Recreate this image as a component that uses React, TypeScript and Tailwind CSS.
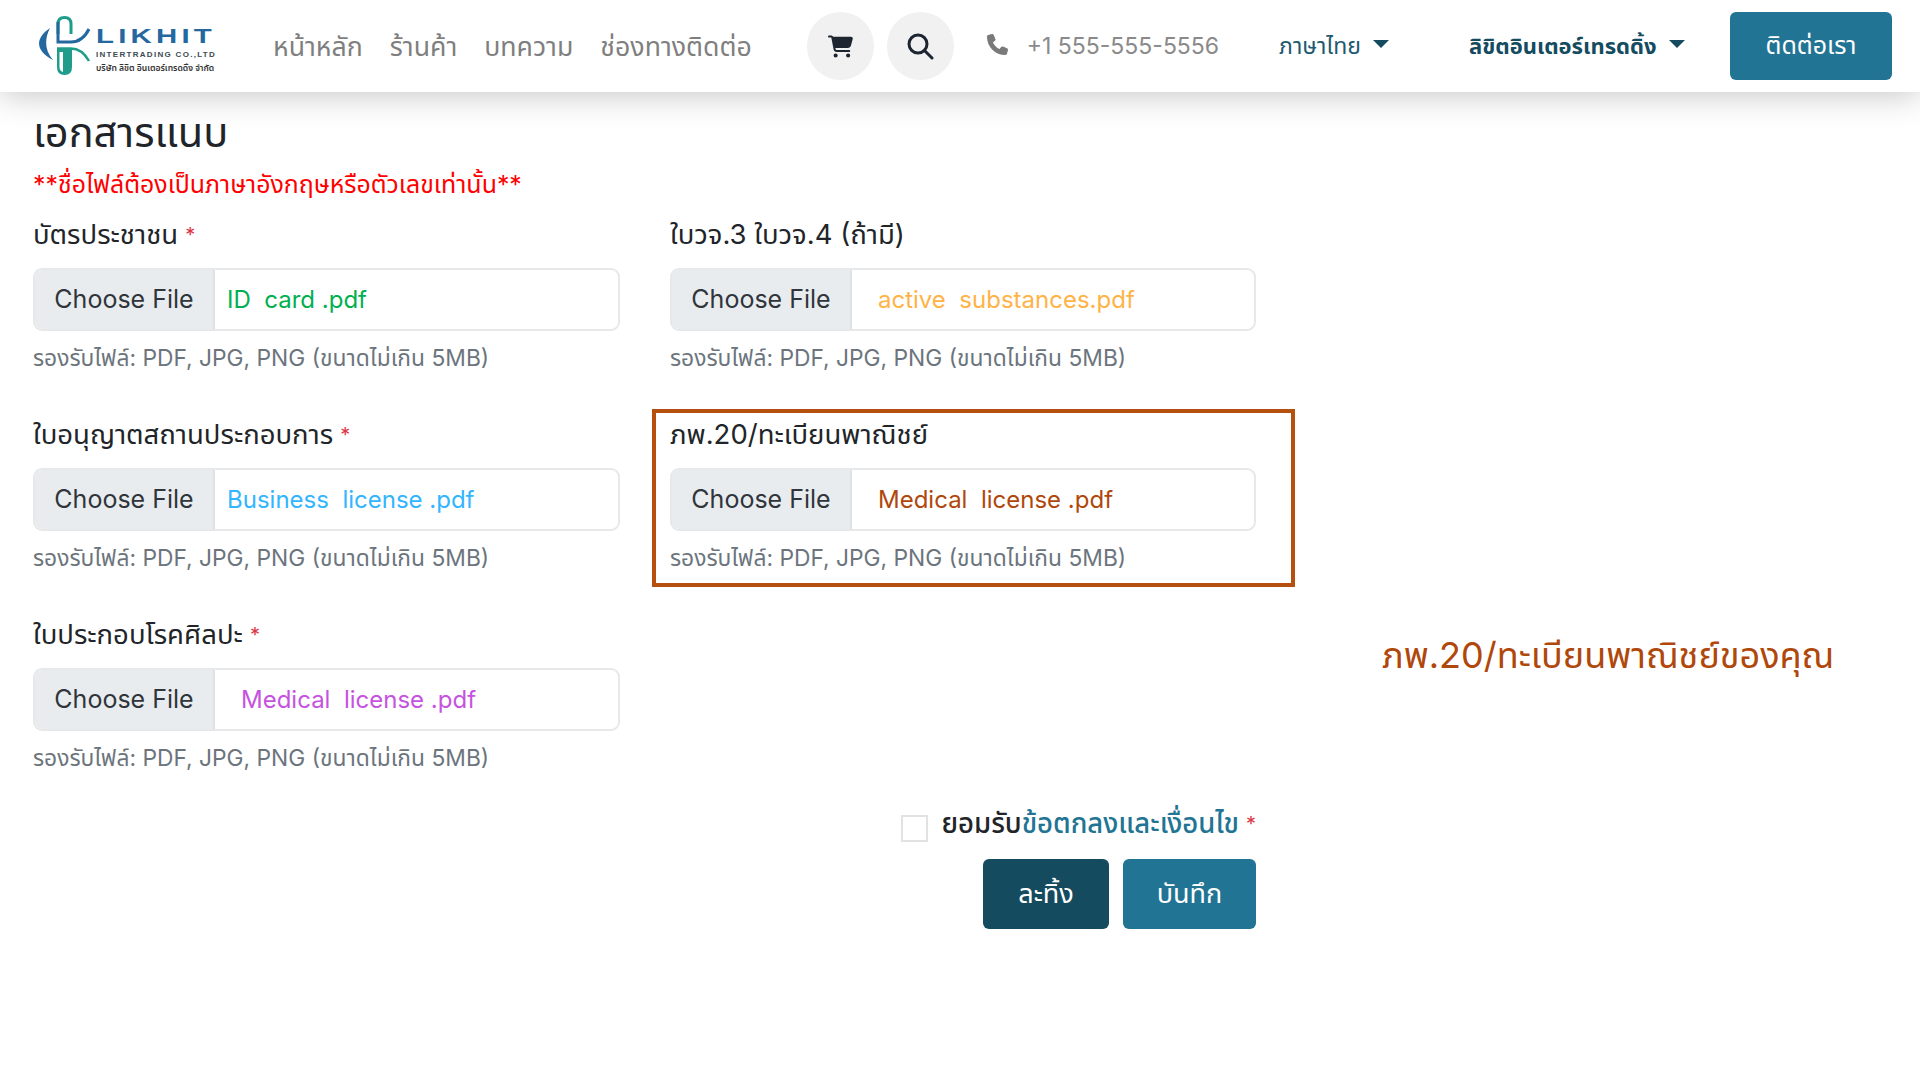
const font = '"Inter", "Noto Sans", "Noto Sans Thai", "Noto Sans CJK SC", sans-serif';

function Logo() {
  return (
    <div className="relative h-[68px] w-[190px] shrink-0">
      <svg viewBox="0 0 60 62" className="absolute left-[4px] top-[3px] h-[62px] w-[60px]" fill="none">
        <path d="M13 13 C-3 24 -1 36 16 45 C8 36 7 25 13 13Z" fill="#24689f" />
        <path d="M21 19 V9 Q21 2.500 27.500 2.500 Q34 2.500 34 9 V19" stroke="#1f9d8a" strokeWidth="3" />
        <path d="M21 7 V27 H34 C43 27 48 22 52 14" stroke="#24689f" strokeWidth="3" />
        <path d="M20 34 V52 Q20 60 27.500 60 Q35 60 35 52 V34 Z" fill="#1f9d8a" />
        <path d="M22.500 37 V52 Q22.500 56 26 57 V37Z" fill="#ffffff" />
        <path d="M20 33.500 H34 C43 33.500 48 39 52 46" stroke="#1f9d8a" strokeWidth="2.500" />
      </svg>
      <div className="absolute left-[63px] top-[11px] origin-left scale-x-[1.4] font-['Liberation_Sans'] text-[21px] font-bold leading-[26px] tracking-[3px] text-[#24689f]">LIKHIT</div>
      <div className="absolute left-[63px] top-[37px] whitespace-nowrap font-['Liberation_Sans'] text-[8px] font-bold leading-[12px] tracking-[1.3px] text-[#3c4a52]">INTERTRADING CO.,LTD</div>
      <div className="absolute left-[63px] top-[50px] whitespace-nowrap text-[8.6px] font-semibold leading-[12px] text-[#333]">บริษัท ลิขิต อินเตอร์เทรดดิ้ง จำกัด</div>
    </div>
  );
}

function Caret({ color }: { color: string }) {
  return (
    <svg width="16" height="8" viewBox="0 0 16 8" className="ml-[12px] mb-1 shrink-0">
      <path d="M0 0H16L8 8Z" fill={color} />
    </svg>
  );
}

function Navbar() {
  return (
    <header className="relative z-10 flex h-[92px] items-center bg-white pl-[33px] pr-[28px] shadow-[0_4px_32px_rgba(0,0,0,0.22)]">
      <Logo />
      <nav className="ml-[50px] flex gap-[27px] text-[26.7px] text-[#7f7f7f]">
        <span>หน้าหลัก</span>
        <span>ร้านค้า</span>
        <span>บทความ</span>
        <span>ช่องทางติดต่อ</span>
      </nav>
      <div className="ml-[55px] flex gap-[13px]">
        <div className="flex h-[68px] w-[67px] items-center justify-center rounded-full bg-[#f1f1f1]">
          <svg width="25" height="23" viewBox="0 0 576 512" fill="#1c2530">
            <path d="M0 24C0 10.7 10.7 0 24 0H69.5c22 0 41.5 12.8 50.6 32h411c26.3 0 45.5 25 38.6 50.4l-41 152.3c-8.5 31.4-37 53.3-69.5 53.3H170.7l5.4 28.5c2.2 11.3 12.1 19.5 23.6 19.5H488c13.3 0 24 10.7 24 24s-10.7 24-24 24H199.7c-34.6 0-64.3-24.6-70.7-58.5L77.4 54.5c-.7-3.8-4-6.5-7.9-6.5H24C10.7 48 0 37.3 0 24zM128 464a48 48 0 1 1 96 0 48 48 0 1 1-96 0zm336-48a48 48 0 1 1 0 96 48 48 0 1 1 0-96z" />
          </svg>
        </div>
        <div className="flex h-[68px] w-[67px] items-center justify-center rounded-full bg-[#f1f1f1]">
          <svg width="28" height="28" viewBox="0 0 28 28" fill="none" stroke="#1c2530" strokeWidth="3">
            <circle cx="12" cy="12" r="9" />
            <path d="M18.5 18.5L26 26" strokeLinecap="round" />
          </svg>
        </div>
      </div>
      <svg width="21" height="23" viewBox="0 0 512 512" fill="#7a7a7a" className="ml-[33px] mb-1">
        <path d="M164.900 24.600c-7.700-18.600-28-28.500-47.400-23.200l-88 24C12.100 30.200 0 46 0 64C0 311.400 200.600 512 448 512c18 0 33.800-12.100 38.600-29.500l24-88c5.300-19.400-4.600-39.700-23.200-47.400l-96-40c-16.300-6.800-35.200-2.100-46.300 11.600L304.700 368C234.300 334.700 177.300 277.700 144 207.300L193.300 167c13.700-11.200 18.400-30 11.600-46.300l-40-96z" />
      </svg>
      <span className="ml-[19px] text-[23px] text-[#8a8a8a]">+1 555-555-5556</span>
      <div className="ml-[60px] flex items-center text-[23px] text-[#1f5a70]">
        ภาษาไทย
        <Caret color="#154b5f" />
      </div>
      <div className="ml-[80px] flex items-center text-[22px] font-bold text-[#154b5f]">
        ลิขิตอินเตอร์เทรดดิ้ง
        <Caret color="#154b5f" />
      </div>
      <div className="ml-auto flex h-[68px] w-[162px] items-center justify-center rounded-[6px] bg-[#227494] text-[25px] text-white">ติดต่อเรา</div>
    </header>
  );
}

function Field({ label, required, file, color, indent, boxed }: { label: string; required?: boolean; file: string; color: string; indent?: boolean; boxed?: boolean }) {
  return (
    <div className="relative">
      {boxed && <div className="absolute left-[-18px] right-[-39px] top-[-14px] h-[178px] border-4 border-[#b5500f]" />}
      <div className="flex h-[24px] items-center text-[27.5px] text-[#212529]">
        <span>{label}</span>
        {required && <span className="ml-[7px] text-[20px] text-[#dc3545]">*</span>}
      </div>
      <div className="mt-[21px] flex h-[63px] overflow-hidden rounded-[9px] border-2 border-[#e6e8ea] bg-white text-[24px]">
        <div className="flex w-[180px] shrink-0 items-center justify-center border-r-2 border-[#dee2e6] bg-[#e9ecef] text-[25px] text-[#2f353b]">Choose File</div>
        <div className={`flex items-center whitespace-pre ${indent ? 'pl-[26px]' : 'pl-[12px]'}`} style={{ color }}>{file}</div>
      </div>
      <div className="mt-[14px] text-[22.8px] leading-[26px] text-[#6c757d]">รองรับไฟล์: PDF, JPG, PNG (ขนาดไม่เกิน 5MB)</div>
    </div>
  );
}

export default function App() {
  return (
    <div className="min-h-[1080px] bg-white" style={{ fontFamily: font }}>
      <Navbar />
      <main className="flex pl-[33px]">
        <div className="w-[1223px] shrink-0">
          <h1 className="mt-[18px] text-[41.5px] font-normal leading-[44px] text-[#212529]">เอกสารแนบ</h1>
          <p className="mt-[16px] text-[24.9px] leading-[28px] text-[#ff0000]">**ชื่อไฟล์ต้องเป็นภาษาอังกฤษหรือตัวเลขเท่านั้น**</p>
          <div className="mt-[25px] grid grid-cols-[587px_586px] gap-x-[50px] gap-y-[52px]">
            <Field label="บัตรประชาชน" required file="ID  card .pdf" color="#00b050" />
            <Field label="ใบวจ.3 ใบวจ.4 (ถ้ามี)" file="active  substances.pdf" color="#ffb347" indent />
            <Field label="ใบอนุญาตสถานประกอบการ" required file="Business  license .pdf" color="#33b5ff" />
            <Field label="ภพ.20/ทะเบียนพาณิชย์" file="Medical  license .pdf" color="#b0470b" indent boxed />
            <Field label="ใบประกอบโรคศิลปะ" required file="Medical  license .pdf" color="#c653e0" indent />
          </div>
          <div className="mt-[36px] flex flex-col items-end">
            <div className="flex h-[34px] items-center">
              <div className="mt-[8px] h-[27px] w-[27px] border-2 border-[#e2e2e2] bg-white" />
              <span className="ml-[14px] text-[27.5px] font-medium text-[#212529]">ยอมรับ</span>
              <span className="text-[27.5px] font-medium text-[#227494]">ข้อตกลงและเงื่อนไข</span>
              <span className="ml-[7px] text-[20px] text-[#dc3545]">*</span>
            </div>
            <div className="mt-[18px] flex gap-[14px]">
              <button className="flex h-[70px] w-[126px] items-center justify-center rounded-[6px] bg-[#154b5f] text-[27px] text-white">ละทิ้ง</button>
              <button className="flex h-[70px] w-[133px] items-center justify-center rounded-[6px] bg-[#227494] text-[27px] text-white">บันทึก</button>
            </div>
          </div>
        </div>
        <div className="ml-[126px] mt-[536px] whitespace-nowrap text-[36px] leading-[54px] text-[#b0470b]">ภพ.20/ทะเบียนพาณิชย์ของคุณ</div>
      </main>
    </div>
  );
}
